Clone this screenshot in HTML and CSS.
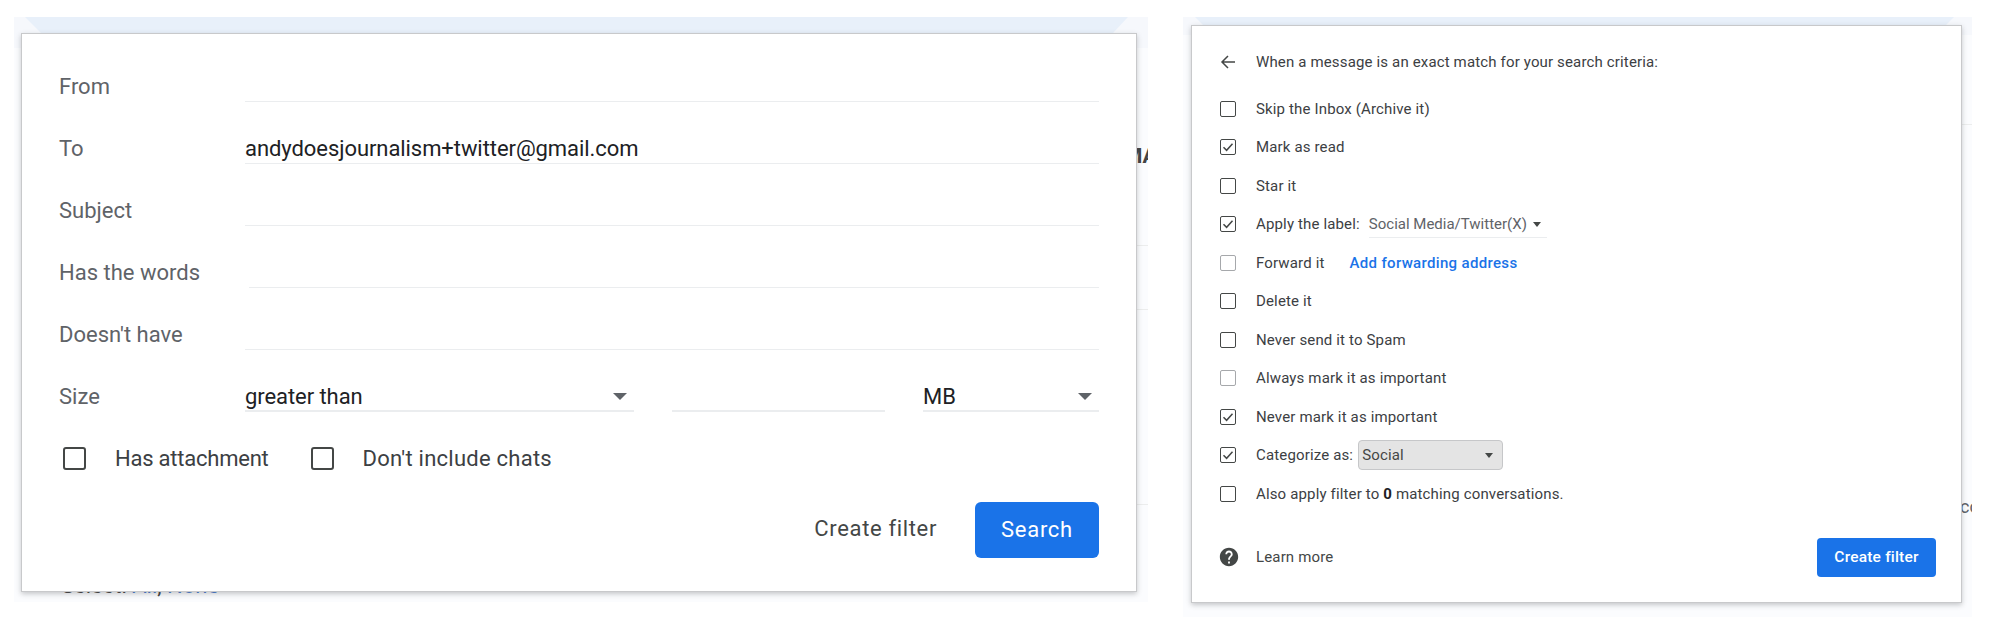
FILE: index.html
```html
<!DOCTYPE html>
<html lang="en">
<head>
<meta charset="utf-8">
<title>Gmail filter</title>
<link rel="stylesheet" href="styles.css">
</head>
<body>
<main class="page">
  <section class="panel panel-search">
    <div class="band"></div>
    <span class="peek peek-ma">MA</span>
    <span class="peek peek-select">Select: <a class="peek-link">All</a>, <a class="peek-link">None</a></span>
    <i class="rule rule-a"></i><i class="rule rule-b"></i><i class="rule rule-c"></i>
    <div class="card card-search">
      <div class="row"><span class="label">From</span><span class="field"></span></div>
      <div class="row"><span class="label">To</span><span class="field">andydoesjournalism+twitter@gmail.com</span></div>
      <div class="row"><span class="label">Subject</span><span class="field"></span></div>
      <div class="row"><span class="label">Has the words</span><span class="field field-shifted"></span></div>
      <div class="row"><span class="label">Doesn't have</span><span class="field"></span></div>
      <div class="row">
        <span class="label">Size</span>
        <span class="field field-size">greater than<b class="caret"></b></span>
        <span class="field field-number"></span>
        <span class="field field-unit">MB<b class="caret"></b></span>
      </div>
      <div class="checks">
        <span class="box box-large"></span><span class="check-text check-attach">Has attachment</span>
        <span class="box box-large box-second"></span><span class="check-text check-chats">Don't include chats</span>
      </div>
      <div class="actions">
        <span class="link-button">Create filter</span>
        <span class="primary primary-large">Search</span>
      </div>
    </div>
  </section>

  <section class="panel panel-filter">
    <div class="band"></div>
    <span class="peek peek-cc">cc</span>
    <i class="rule rule-d"></i>
    <div class="card card-filter">
      <div class="option option-head">
        <svg class="back" viewBox="0 0 16 16" width="16" height="16"><path d="M15 8H2M8 2 2 8l6 6" fill="none" stroke="#444746" stroke-width="1.5"/></svg>
        <span>When a message is an exact match for your search criteria:</span>
      </div>
      <div class="option"><span class="box"></span><span>Skip the Inbox (Archive it)</span></div>
      <div class="option"><span class="box"><svg viewBox="0 0 12 12" width="12" height="12"><path d="M1.5 6.2 4.6 9.3 10.5 2.8" fill="none" stroke="#444746" stroke-width="1.5"/></svg></span><span>Mark as read</span></div>
      <div class="option"><span class="box"></span><span>Star it</span></div>
      <div class="option"><span class="box"><svg viewBox="0 0 12 12" width="12" height="12"><path d="M1.5 6.2 4.6 9.3 10.5 2.8" fill="none" stroke="#444746" stroke-width="1.5"/></svg></span><span class="tight">Apply the label:</span><span class="label-select">Social Media/Twitter(X)<b class="caret caret-small"></b></span></div>
      <div class="option"><span class="box box-muted"></span><span>Forward it</span><a class="blue-link">Add forwarding address</a></div>
      <div class="option"><span class="box"></span><span>Delete it</span></div>
      <div class="option"><span class="box"></span><span>Never send it to Spam</span></div>
      <div class="option"><span class="box box-muted"></span><span>Always mark it as important</span></div>
      <div class="option"><span class="box"><svg viewBox="0 0 12 12" width="12" height="12"><path d="M1.5 6.2 4.6 9.3 10.5 2.8" fill="none" stroke="#444746" stroke-width="1.5"/></svg></span><span>Never mark it as important</span></div>
      <div class="option"><span class="box"><svg viewBox="0 0 12 12" width="12" height="12"><path d="M1.5 6.2 4.6 9.3 10.5 2.8" fill="none" stroke="#444746" stroke-width="1.5"/></svg></span><span class="tight">Categorize as:</span><span class="category">Social<b class="caret caret-small"></b></span></div>
      <div class="option"><span class="box"></span><span>Also apply filter to <strong>0</strong> matching conversations.</span></div>
      <div class="filter-foot">
        <svg class="help" viewBox="0 0 24 24" width="22" height="22"><path fill="#444746" d="M12 2C6.48 2 2 6.48 2 12s4.48 10 10 10 10-4.48 10-10S17.52 2 12 2zm1 17h-2v-2h2v2zm2.07-7.75l-.9.92C13.45 12.9 13 13.5 13 15h-2v-.5c0-1.1.45-2.1 1.17-2.83l1.24-1.26c.37-.36.59-.86.59-1.41 0-1.1-.9-2-2-2s-2 .9-2 2H8c0-2.21 1.79-4 4-4s4 1.79 4 4c0 .88-.36 1.68-.93 2.25z"/></svg>
        <span class="learn">Learn more</span>
        <span class="primary primary-small">Create filter</span>
      </div>
    </div>
  </section>
</main>
</body>
</html>
```

FILE: styles.css
```css
* { box-sizing: border-box; }

html, body { margin: 0; background: #fff; }

body {
  width: 2000px;
  height: 634px;
  overflow: hidden;
  font-family: Roboto, "Liberation Sans", sans-serif;
  color: #3c4043;
}

.page {
  display: flex;
  align-items: flex-start;
  gap: 35px;
  padding: 17px 0 0 14px;
}

/* Blurred page behind each dialog */
.panel {
  position: relative;
  display: flex;
  overflow: hidden;
}

.panel-search {
  width: 1134px;
  height: 585px;
  padding: 16px 11px 10px 7px;
  background: linear-gradient(#f6f8fc 0 31px, #fbfcfe 31px);
}

.panel-filter {
  width: 789px;
  height: 600px;
  padding: 8px 10px 14px 8px;
  background: linear-gradient(#f6f8fc 0 18px, #fbfcfe 18px);
}

.band {
  position: absolute;
  top: 0;
  left: 0;
  right: 0;
  height: 16px;
  background: #e8f0fa;
  clip-path: polygon(11px 0, calc(100% - 20px) 0, calc(100% - 35px) 16px, 27px 16px);
}

.panel-filter .band {
  height: 8px;
  clip-path: polygon(12px 0, calc(100% - 18px) 0, calc(100% - 26px) 8px, 20px 8px);
}

.peek { position: absolute; white-space: nowrap; }

.peek-ma { left: 1110px; top: 127px; font-size: 21px; font-weight: 700; color: #444; }
.peek-select { left: 47px; top: 556px; font-size: 22px; color: #444; }
.peek-link { color: #4a7fd4; }
.peek-cc { left: 777px; top: 479px; font-size: 18px; color: #5f6368; }

.rule { position: absolute; right: 0; width: 30px; height: 1px; background: #eceded; }
.rule-a { top: 228px; }
.rule-b { top: 292px; }
.rule-c { top: 487px; }
.rule-d { top: 107px; }

.card {
  position: relative;
  z-index: 1;
  flex: 1;
  background: #fff;
  border: 1px solid #c8c9cb;
  box-shadow: 0 2px 5px rgba(60, 64, 67, .28);
}

/* Search form */
.card-search { padding: 6px 37px 0 38px; }

.row {
  display: flex;
  align-items: flex-end;
  height: 62px;
}

.label {
  flex: 0 0 185px;
  height: 31px;
  margin-left: -1px;
  margin-right: 1px;
  font-size: 22px;
  line-height: 32px;
  color: #5f6368;
}

.field {
  position: relative;
  flex: 1;
  height: 31px;
  font-size: 22px;
  line-height: 32px;
  letter-spacing: -.07px;
  color: #202124;
  border-bottom: 1px solid #ebedef;
}

.field-shifted { margin-left: 4px; }
.field-size { flex: 0 0 389px; border-bottom-width: 2px; }
.field-number { flex: 0 0 213px; margin-left: 38px; border-bottom-width: 2px; }
.field-unit { flex: 0 0 176px; margin-left: 38px; border-bottom-width: 2px; }

.caret {
  position: absolute;
  right: 7px;
  top: 12px;
  width: 0;
  height: 0;
  border-left: 7px solid transparent;
  border-right: 7px solid transparent;
  border-top: 7px solid #5f6368;
}

.checks {
  display: flex;
  align-items: center;
  height: 30px;
  margin: 31px 0 0 3px;
  font-size: 22px;
}

.check-text { color: #3c4043; }
.check-attach { letter-spacing: -.23px; }
.check-chats { letter-spacing: .25px; }

.box {
  display: flex;
  align-items: center;
  justify-content: center;
  flex: 0 0 16px;
  width: 16px;
  height: 16px;
  border: 1.7px solid #444746;
  border-radius: 2px;
}

.box-large {
  flex: 0 0 23px;
  width: 23px;
  height: 23px;
  margin-right: 29px;
  border-width: 2.5px;
  border-radius: 3px;
}

.box-second { margin-left: 42px; }
.box-muted { border-color: #a6a8ab; }

.actions {
  display: flex;
  align-items: center;
  justify-content: flex-end;
  gap: 38px;
  margin-top: 29px;
}

.link-button { padding-bottom: 3px; font-size: 22px; color: #444746; letter-spacing: .65px; }

.primary {
  display: flex;
  align-items: center;
  justify-content: center;
  background: #1a73e8;
  color: #fff;
}

.primary-large {
  width: 124px;
  height: 56px;
  padding-bottom: 2px;
  border-radius: 6px;
  font-size: 22px;
  letter-spacing: .7px;
}

.primary-small {
  width: 119px;
  height: 39px;
  margin-left: auto;
  border-radius: 4px;
  font-size: 15.5px;
  font-weight: 500;
  letter-spacing: .2px;
}

/* Filter actions */
.card-filter { padding: 16.75px 25px 0 28px; font-size: 15px; letter-spacing: .15px; color: #3c4043; }

.option {
  display: flex;
  align-items: center;
  gap: 20px;
  height: 38.5px;
  white-space: nowrap;
}

.option-head { margin-bottom: 8.25px; }
.option strong { font-weight: 700; color: #202124; }
.tight { margin-right: -11px; }
.back { flex: none; }

.label-select {
  position: relative;
  width: 178px;
  height: 26px;
  line-height: 24px;
  letter-spacing: 0;
  color: #5f6368;
  border-bottom: 1px solid #ebedef;
  margin-top: 1px;
}

.caret-small {
  right: 6px;
  top: 10px;
  border-left-width: 4.5px;
  border-right-width: 4.5px;
  border-top-width: 5px;
  border-top-color: #444746;
}

.blue-link { margin-left: 5px; font-weight: 500; letter-spacing: .33px; color: #1a73e8; }

.category {
  position: relative;
  width: 145px;
  height: 30px;
  padding-left: 3px;
  line-height: 28px;
  color: #444746;
  background: #e4e4e4;
  border: 1px solid #c6c7c9;
  border-radius: 4px;
  margin-left: -4px;
}

.category .caret-small { right: 9px; top: 12px; }

.filter-foot {
  display: flex;
  align-items: center;
  margin-top: 24.5px;
  height: 39px;
}

.help { flex: none; margin-left: -2px; }
.learn { margin-left: 16px; color: #444746; }
```
